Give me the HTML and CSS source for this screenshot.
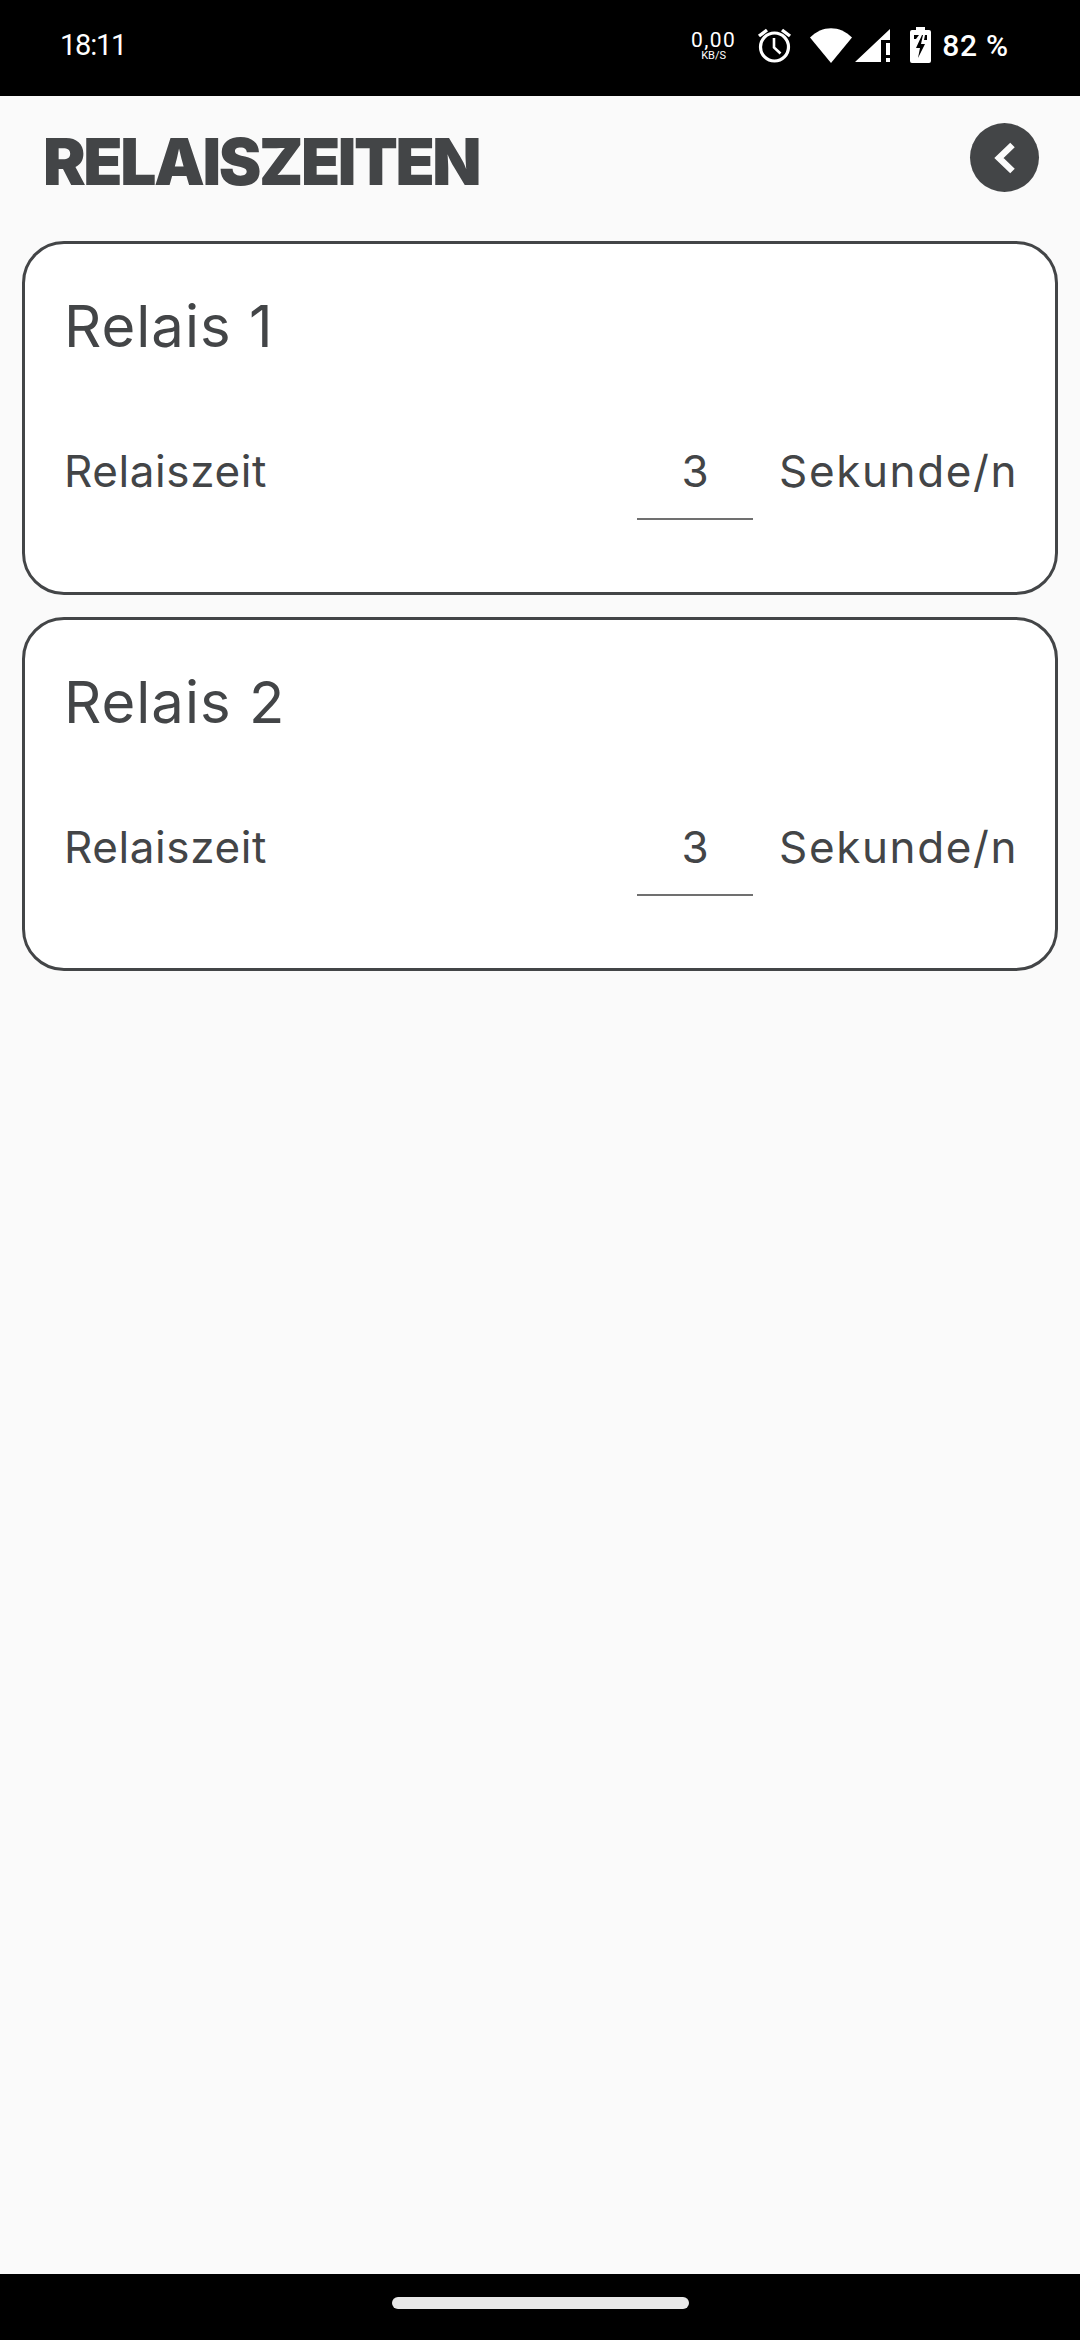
FILE: index.html
```html
<!DOCTYPE html>
<html lang="de">
<head>
<meta charset="utf-8">
<title>Relaiszeiten</title>
<link rel="stylesheet" href="styles.css">
</head>
<body>
<div class="screen">
  <header class="status">
    <span class="clock">18:11</span>
    <div class="status-icons">
      <div class="speed"><span class="speed-num">0,00</span><span class="speed-unit">KB/S</span></div>
      <svg class="ic-alarm" width="35" height="36" viewBox="0 0 35 36"><circle cx="17.5" cy="20" r="14" fill="none" stroke="#fff" stroke-width="3.2"/><path d="M17 11v9.5l6.5 6" fill="none" stroke="#fff" stroke-width="2.6"/><path d="M2 9l8-6M33 9l-8-6" fill="none" stroke="#fff" stroke-width="3.4"/></svg>
      <svg class="ic-wifi" width="42" height="35" viewBox="0 0 42 35"><path d="M0 9.5C12-3 30-3 42 9.5L21 35z" fill="#fff"/></svg>
      <svg class="ic-signal" width="35" height="35" viewBox="0 0 35 35"><path d="M0 34L35 1v11H26V34z" fill="#fff"/><rect x="31" y="15" width="4" height="12" fill="#fff"/><rect x="31" y="30" width="4" height="4" fill="#fff"/></svg>
      <svg class="ic-batt" width="21" height="36" viewBox="0 0 21 36"><path d="M6 0h9v3h4a2 2 0 0 1 2 2v29a2 2 0 0 1-2 2H2a2 2 0 0 1-2-2V5a2 2 0 0 1 2-2h4z" fill="#fff"/><path d="M4 8h5l-3 4H4zM17 8v5h-3l1-5zM12 8L6 21h4l-2 10 7-14h-4l2-9z" fill="#000"/></svg>
      <span class="pct">82 %</span>
    </div>
  </header>
  <main class="content">
    <div class="title-row">
      <h1 class="title">RELAISZEITEN</h1>
      <button class="back" type="button" aria-label="Zurück">
        <svg width="24" height="34" viewBox="0 0 24 34"><path d="M19.5 4L6 17l13.5 13" fill="none" stroke="#fbfbfb" stroke-width="6.5"/></svg>
      </button>
    </div>
    <section class="card">
      <h2 class="card-title">Relais 1</h2>
      <div class="field">
        <span class="label">Relaiszeit</span>
        <span class="value">3</span>
        <span class="unit">Sekunde/n</span>
      </div>
    </section>
    <section class="card">
      <h2 class="card-title">Relais 2</h2>
      <div class="field">
        <span class="label">Relaiszeit</span>
        <span class="value">3</span>
        <span class="unit">Sekunde/n</span>
      </div>
    </section>
  </main>
  <footer class="nav"><div class="home-bar"></div></footer>
</div>
</body>
</html>
```
FILE: styles.css
```css
* { box-sizing: border-box; }
html, body { margin: 0; padding: 0; }
body { font-family: "Inter", "Liberation Sans", sans-serif; color: #434547; }
.screen { width: 1080px; height: 2340px; display: flex; flex-direction: column; background: #fafafa; }

.status { height: 96px; flex: none; background: #000; color: #fff; display: flex; align-items: center; justify-content: space-between; padding: 0 71px 6px 60px; font-family: "Roboto", sans-serif; }
.clock { font-size: 29px; font-weight: 400; letter-spacing: -1.2px; }
.status-icons { display: flex; align-items: center; }
.speed { display: flex; flex-direction: column; align-items: center; width: 47px; margin-right: 20px; line-height: 1; }
.speed-num { font-size: 21px; letter-spacing: 1.4px; }
.speed-unit { font-size: 11px; margin-top: -1px; }
.ic-wifi { margin-left: 18px; }
.ic-signal { margin-left: 3px; }
.ic-batt { margin-left: 20px; }
.pct { font-size: 30px; font-weight: 500; margin-left: 11px; letter-spacing: 0.8px; }

.content { flex: 1; padding: 0 22px; display: flex; flex-direction: column; gap: 22px; }
.title-row { height: 123px; padding: 0 19px 0 21px; display: flex; align-items: center; justify-content: space-between; }
.title { margin: 8px 0 0; font-size: 64px; font-weight: 900; line-height: 1; letter-spacing: -2.4px; }
.back { width: 69px; height: 69px; padding: 0; border: 0; border-radius: 50%; background: #434547; display: flex; align-items: center; justify-content: center; }

.card { height: 354px; background: #fff; border: 3px solid #434547; border-radius: 42px; padding: 0 37px 0 39px; }
.card-title { margin: 0; padding-top: 47px; font-size: 58px; font-weight: 400; line-height: 70px; letter-spacing: 1px; }
.field { display: flex; align-items: baseline; margin-top: 85px; font-size: 44px; line-height: 50px; }
.label { flex: 1; letter-spacing: 0.6px; }
.value { width: 116px; padding-bottom: 22px; border-bottom: 2px solid #707070; text-align: center; margin-right: 26px; }
.unit { letter-spacing: 1.6px; }

.nav { height: 66px; flex: none; background: #000; display: flex; justify-content: center; padding-top: 23px; }
.home-bar { width: 297px; height: 12px; border-radius: 6px; background: #e8e8e8; }
```
